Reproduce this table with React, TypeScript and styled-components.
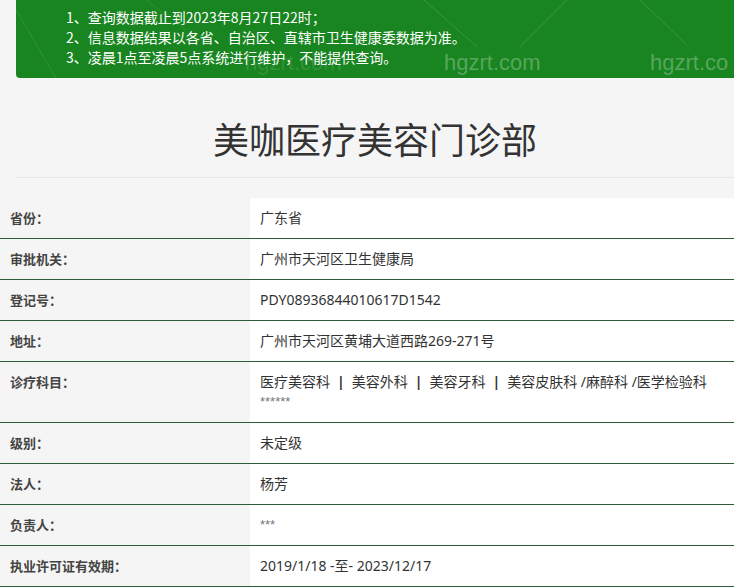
import React from "react";
import styled, { createGlobalStyle } from "styled-components";

const Global = createGlobalStyle`
  html, body { margin: 0; padding: 0; background: #f5f5f5; }
  body { font-family: "Noto Sans CJK SC", "Noto Sans", sans-serif; color: #333; overflow: hidden; }
`;

const Page = styled.div`
  width: 734px;
  height: 587px;
  overflow: hidden;
  background: #f5f5f5;
`;

const Banner = styled.div`
  position: relative;
  margin-left: 16px;
  height: 78px;
  background: #188520;
  border-bottom-left-radius: 4px;
  padding: 7px 0 0 50px;
  box-sizing: border-box;
  overflow: hidden;
`;

const Notice = styled.div`
  font-size: 14px;
  line-height: 20px;
  color: #fff;
  white-space: nowrap;
  position: relative;
  z-index: 1;
`;

const Mark = styled.span<{ $x: number; $faint?: boolean }>`
  position: absolute;
  left: ${(p) => p.$x}px;
  top: 50px;
  font-family: "Liberation Sans", Arial, sans-serif;
  font-size: 22px;
  line-height: 26px;
  color: ${(p) => (p.$faint ? "rgba(255,255,255,0.12)" : "rgba(255,255,255,0.28)")};
  z-index: 2;
`;

const Lines = styled.svg`
  position: absolute;
  left: 0;
  top: 0;
  z-index: 0;
`;

const Title = styled.h1`
  margin: 0 0 0 16px;
  height: 100px;
  box-sizing: border-box;
  padding-top: 20px;
  display: flex;
  align-items: center;
  justify-content: center;
  font-size: 36px;
  font-weight: 400;
  color: #333;
  border-bottom: 1px solid #e6e6e6;
`;

const Table = styled.div`
  margin-top: 20px;
  display: flex;
  flex-direction: column;
`;

const Row = styled.div`
  display: grid;
  grid-template-columns: 250px 1fr;
  border-bottom: 1px solid #2f5a3c;
`;

const Label = styled.div`
  padding: 10px 10px;
  font-size: 13px;
  line-height: 20px;
  font-weight: 700;
  color: #444;
`;

const Value = styled.div`
  background: #fff;
  padding: 10px 10px;
  font-family: "Noto Sans", "Noto Sans CJK SC", sans-serif;
  font-size: 14px;
  line-height: 20px;
  color: #333;
`;

const Stars = styled.div`
  font-family: "Liberation Sans", Arial, sans-serif;
  font-size: 13px;
  line-height: 20px;
  color: #777;
`;

const Sep = styled.span`
  color: #333;
  font-weight: 700;
  margin: 0 7px;
`;

const rows: [string, React.ReactNode][] = [
  ["省份：", "广东省"],
  ["审批机关：", "广州市天河区卫生健康局"],
  ["登记号：", "PDY08936844010617D1542"],
  ["地址：", "广州市天河区黄埔大道西路269-271号"],
  [
    "诊疗科目：",
    <>
      <div>
        医疗美容科<Sep>|</Sep>美容外科<Sep>|</Sep>美容牙科<Sep>|</Sep>美容皮肤科 /麻醉科 /医学检验科
      </div>
      <Stars>******</Stars>
    </>,
  ],
  ["级别：", "未定级"],
  ["法人：", "杨芳"],
  ["负责人：", <Stars>***</Stars>],
  ["执业许可证有效期：", "2019/1/18 -至- 2023/12/17"],
];

export default function App() {
  return (
    <Page>
      <Global />
      <Banner>
        <Lines width="720" height="78">
          <line x1="0" y1="10" x2="40" y2="78" stroke="rgba(255,255,255,0.10)" />
          <line x1="130" y1="0" x2="170" y2="30" stroke="rgba(255,255,255,0.10)" />
          <line x1="408" y1="0" x2="461" y2="47" stroke="rgba(255,255,255,0.15)" />
          <line x1="551" y1="0" x2="504" y2="47" stroke="rgba(255,255,255,0.15)" />
          <line x1="624" y1="0" x2="671" y2="45" stroke="rgba(255,255,255,0.15)" />
        </Lines>
        <Notice>1、查询数据截止到2023年8月27日22时；</Notice>
        <Notice>2、信息数据结果以各省、自治区、直辖市卫生健康委数据为准。</Notice>
        <Notice>3、凌晨1点至凌晨5点系统进行维护，不能提供查询。</Notice>
        <Mark $x={229} $faint>hgzrt.com</Mark>
        <Mark $x={428}>hgzrt.com</Mark>
        <Mark $x={634}>hgzrt.co</Mark>
      </Banner>
      <Title>美咖医疗美容门诊部</Title>
      <Table>
        {rows.map(([k, v], i) => (
          <Row key={i}>
            <Label>{k}</Label>
            <Value>{v}</Value>
          </Row>
        ))}
      </Table>
    </Page>
  );
}
